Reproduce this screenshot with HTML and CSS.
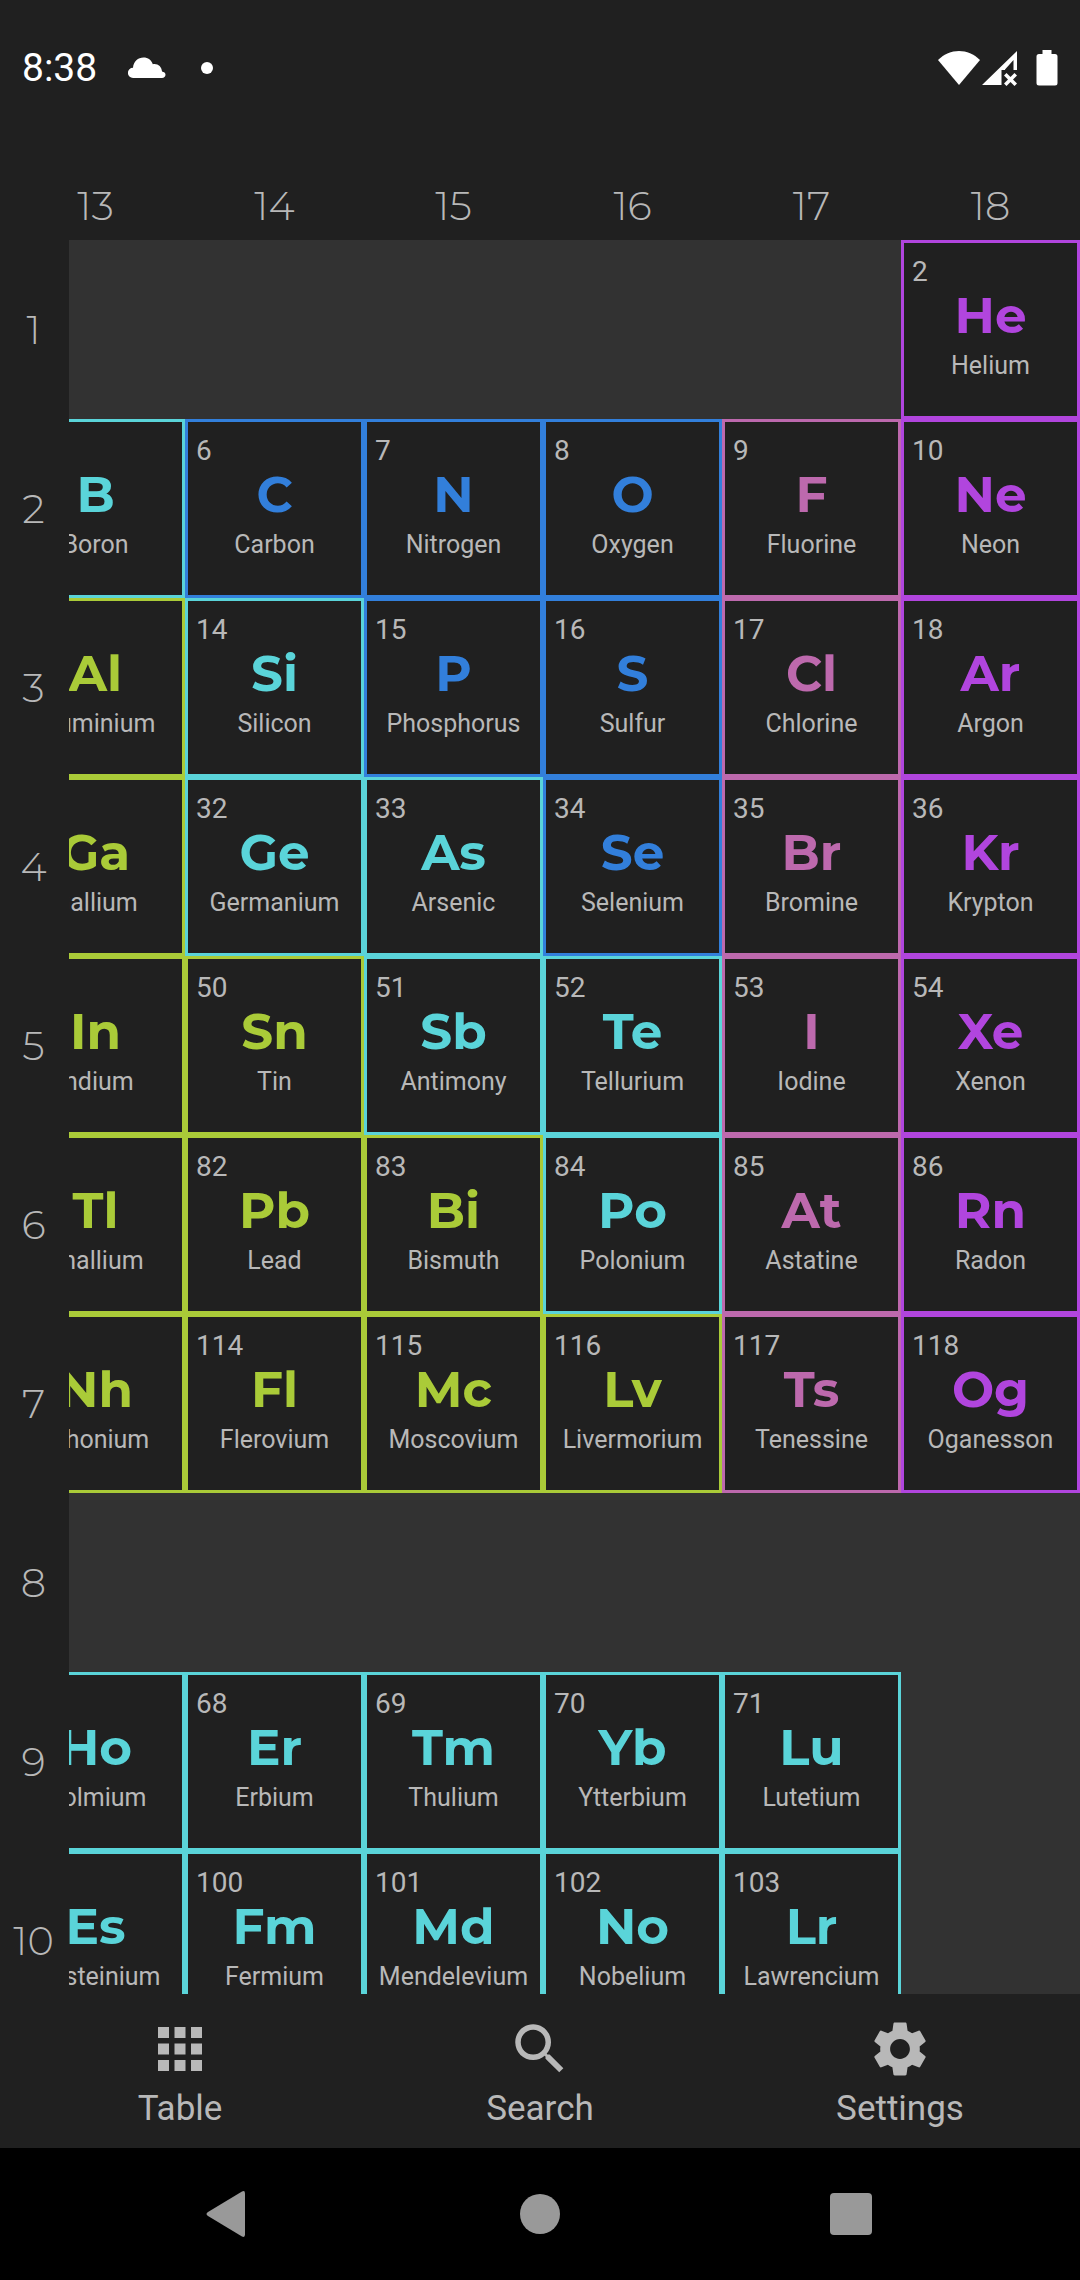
FILE: index.html
```html
<!DOCTYPE html>
<html lang="en">
<head>
<meta charset="utf-8">
<meta name="viewport" content="width=device-width, initial-scale=1">
<title>Periodic Table</title>
<link rel="stylesheet" href="styles.css">
</head>
<body>
<div class="screen">
  <header class="status">
    <div class="status-group status-left">
      <time class="clock">8:38</time>
      <svg class="cloud" width="38" height="22" viewBox="0 0 38 22" aria-hidden="true"><path d="M5 21a5 5 0 0 1 0-10.200C5.500 4.500 10 0.500 15.500 0.500c4.500 0 8 2.700 9.300 6.700 4.700-1 9 2.300 9.200 7.300 2 .3 3.500 1.500 3.500 3.300 0 2-1.500 3.200-3.500 3.200z"/></svg>
      <span class="dot"></span>
    </div>
    <div class="status-group status-right">
      <svg width="42" height="36" viewBox="0 0 42 36" aria-hidden="true"><path d="M0 10C12-2 30-2 42 10L21 35z"/></svg>
      <svg width="36" height="36" viewBox="0 0 36 36" aria-hidden="true"><path d="M0 35L35 1V20H31.500V10L23 19.500V20H19.500V35zM22 25.500l2.500-2.500 4 4 4-4 2.500 2.500-4 4 4 4-2.500 2.500-4-4-4 4-2.500-2.500 4-4z"/></svg>
      <svg class="battery" width="22" height="36" viewBox="0 0 22 36" aria-hidden="true"><path d="M6.500 0h9v4H19a2.500 2.500 0 0 1 2.500 2.500V33a2.500 2.500 0 0 1-2.500 2.500H3A2.500 2.500 0 0 1 .5 33V6.500A2.500 2.500 0 0 1 3 4h3.500z"/></svg>
    </div>
  </header>

  <main class="board">
    <table class="elements">
      <thead>
        <tr><th class="period"></th><th>13</th><th>14</th><th>15</th><th>16</th><th>17</th><th>18</th></tr>
      </thead>
      <tbody>
        <tr>
          <th class="period">1</th>
          <td colspan="5"></td>
          <td class="el noble"><span class="num">2</span><b>He</b><span class="name">Helium</span></td>
        </tr>
        <tr>
          <th class="period">2</th>
          <td class="el metalloid"><span class="num">5</span><b>B</b><span class="name">Boron</span></td>
          <td class="el nonmetal"><span class="num">6</span><b>C</b><span class="name">Carbon</span></td>
          <td class="el nonmetal"><span class="num">7</span><b>N</b><span class="name">Nitrogen</span></td>
          <td class="el nonmetal"><span class="num">8</span><b>O</b><span class="name">Oxygen</span></td>
          <td class="el halogen"><span class="num">9</span><b>F</b><span class="name">Fluorine</span></td>
          <td class="el noble"><span class="num">10</span><b>Ne</b><span class="name">Neon</span></td>
        </tr>
        <tr>
          <th class="period">3</th>
          <td class="el metal"><span class="num">13</span><b>Al</b><span class="name">Aluminium</span></td>
          <td class="el metalloid"><span class="num">14</span><b>Si</b><span class="name">Silicon</span></td>
          <td class="el nonmetal"><span class="num">15</span><b>P</b><span class="name">Phosphorus</span></td>
          <td class="el nonmetal"><span class="num">16</span><b>S</b><span class="name">Sulfur</span></td>
          <td class="el halogen"><span class="num">17</span><b>Cl</b><span class="name">Chlorine</span></td>
          <td class="el noble"><span class="num">18</span><b>Ar</b><span class="name">Argon</span></td>
        </tr>
        <tr>
          <th class="period">4</th>
          <td class="el metal"><span class="num">31</span><b>Ga</b><span class="name">Gallium</span></td>
          <td class="el metalloid"><span class="num">32</span><b>Ge</b><span class="name">Germanium</span></td>
          <td class="el metalloid"><span class="num">33</span><b>As</b><span class="name">Arsenic</span></td>
          <td class="el nonmetal"><span class="num">34</span><b>Se</b><span class="name">Selenium</span></td>
          <td class="el halogen"><span class="num">35</span><b>Br</b><span class="name">Bromine</span></td>
          <td class="el noble"><span class="num">36</span><b>Kr</b><span class="name">Krypton</span></td>
        </tr>
        <tr>
          <th class="period">5</th>
          <td class="el metal"><span class="num">49</span><b>In</b><span class="name">Indium</span></td>
          <td class="el metal"><span class="num">50</span><b>Sn</b><span class="name">Tin</span></td>
          <td class="el metalloid"><span class="num">51</span><b>Sb</b><span class="name">Antimony</span></td>
          <td class="el metalloid"><span class="num">52</span><b>Te</b><span class="name">Tellurium</span></td>
          <td class="el halogen"><span class="num">53</span><b>I</b><span class="name">Iodine</span></td>
          <td class="el noble"><span class="num">54</span><b>Xe</b><span class="name">Xenon</span></td>
        </tr>
        <tr>
          <th class="period">6</th>
          <td class="el metal"><span class="num">81</span><b>Tl</b><span class="name">Thallium</span></td>
          <td class="el metal"><span class="num">82</span><b>Pb</b><span class="name">Lead</span></td>
          <td class="el metal"><span class="num">83</span><b>Bi</b><span class="name">Bismuth</span></td>
          <td class="el metalloid"><span class="num">84</span><b>Po</b><span class="name">Polonium</span></td>
          <td class="el halogen"><span class="num">85</span><b>At</b><span class="name">Astatine</span></td>
          <td class="el noble"><span class="num">86</span><b>Rn</b><span class="name">Radon</span></td>
        </tr>
        <tr>
          <th class="period">7</th>
          <td class="el metal"><span class="num">113</span><b>Nh</b><span class="name">Nihonium</span></td>
          <td class="el metal"><span class="num">114</span><b>Fl</b><span class="name">Flerovium</span></td>
          <td class="el metal"><span class="num">115</span><b>Mc</b><span class="name">Moscovium</span></td>
          <td class="el metal"><span class="num">116</span><b>Lv</b><span class="name">Livermorium</span></td>
          <td class="el halogen"><span class="num">117</span><b>Ts</b><span class="name">Tenessine</span></td>
          <td class="el noble"><span class="num">118</span><b>Og</b><span class="name">Oganesson</span></td>
        </tr>
        <tr>
          <th class="period">8</th>
          <td colspan="6"></td>
        </tr>
        <tr>
          <th class="period">9</th>
          <td class="el metalloid"><span class="num">67</span><b>Ho</b><span class="name">Holmium</span></td>
          <td class="el metalloid"><span class="num">68</span><b>Er</b><span class="name">Erbium</span></td>
          <td class="el metalloid"><span class="num">69</span><b>Tm</b><span class="name">Thulium</span></td>
          <td class="el metalloid"><span class="num">70</span><b>Yb</b><span class="name">Ytterbium</span></td>
          <td class="el metalloid"><span class="num">71</span><b>Lu</b><span class="name">Lutetium</span></td>
          <td></td>
        </tr>
        <tr>
          <th class="period">10</th>
          <td class="el metalloid"><span class="num">99</span><b>Es</b><span class="name">Einsteinium</span></td>
          <td class="el metalloid"><span class="num">100</span><b>Fm</b><span class="name">Fermium</span></td>
          <td class="el metalloid"><span class="num">101</span><b>Md</b><span class="name">Mendelevium</span></td>
          <td class="el metalloid"><span class="num">102</span><b>No</b><span class="name">Nobelium</span></td>
          <td class="el metalloid"><span class="num">103</span><b>Lr</b><span class="name">Lawrencium</span></td>
          <td></td>
        </tr>
      </tbody>
    </table>
  </main>

  <nav class="tabs">
    <button class="tab" type="button">
      <svg width="66" height="66" viewBox="0 0 24 24" aria-hidden="true"><path d="M4 8h4V4H4v4zm6 12h4v-4h-4v4zm-6 0h4v-4H4v4zm0-6h4v-4H4v4zm6 0h4v-4h-4v4zm6-10v4h4V4h-4zm-6 4h4V4h-4v4zm6 6h4v-4h-4v4zm0 6h4v-4h-4v4z"/></svg>
      <span>Table</span>
    </button>
    <button class="tab" type="button">
      <svg width="66" height="66" viewBox="0 0 24 24" aria-hidden="true"><path d="M15.500 14h-.790l-.280-.270C15.410 12.590 16 11.110 16 9.500 16 5.910 13.090 3 9.500 3S3 5.910 3 9.500 5.910 16 9.500 16c1.610 0 3.090-.590 4.230-1.570l.270.280v.790l5 4.990L20.490 19l-4.990-5zm-6 0C7.010 14 5 11.990 5 9.500S7.010 5 9.500 5 14 7.010 14 9.500 11.990 14 9.500 14z"/></svg>
      <span>Search</span>
    </button>
    <button class="tab" type="button">
      <svg width="66" height="66" viewBox="0 0 24 24" aria-hidden="true"><path d="M19.140 12.940c.04-.3.06-.61.06-.94 0-.32-.02-.64-.07-.94l2.030-1.580c.18-.14.23-.41.12-.61l-1.920-3.320c-.12-.22-.37-.29-.59-.22l-2.390.96c-.5-.38-1.030-.7-1.620-.94l-.36-2.540c-.04-.24-.24-.41-.48-.41h-3.840c-.24 0-.43.17-.47.41l-.36 2.540c-.59.24-1.130.57-1.620.94l-2.390-.96c-.22-.08-.47 0-.59.22L2.740 8.870c-.12.21-.08.47.12.61l2.030 1.580c-.05.3-.09.63-.09.94s.02.64.07.94l-2.030 1.580c-.18.14-.23.41-.12.61l1.920 3.320c.12.22.37.29.59.22l2.390-.96c.5.38 1.030.7 1.620.94l.36 2.540c.05.24.24.41.48.41h3.840c.24 0 .44-.17.47-.41l.36-2.540c.59-.24 1.130-.56 1.620-.94l2.390.96c.22.08.47 0 .59-.22l1.920-3.320c.12-.22.07-.47-.12-.61l-2.010-1.580zM12 15.600c-1.980 0-3.600-1.620-3.600-3.600s1.620-3.600 3.600-3.600 3.600 1.620 3.600 3.600-1.620 3.600-3.600 3.600z"/></svg>
      <span>Settings</span>
    </button>
  </nav>

  <footer class="system">
    <button type="button" aria-label="Back"><svg width="48" height="48" viewBox="0 0 48 48" aria-hidden="true"><path d="M38 1.500q3-1.500 3 2v41q0 3.500-3 2L4 26q-3-2 0-4z"/></svg></button>
    <button type="button" aria-label="Home"><svg width="48" height="48" viewBox="0 0 48 48" aria-hidden="true"><circle cx="24" cy="24" r="20"/></svg></button>
    <button type="button" aria-label="Recents"><svg width="48" height="48" viewBox="0 0 48 48" aria-hidden="true"><rect x="2" y="3" width="42" height="42" rx="4"/></svg></button>
  </footer>
</div>
</body>
</html>
```
FILE: styles.css
```css
:root {
  --surface: #202020;
  --empty: #323232;
  --text: #b8b8b8;
  --cell: 179px;
  --gutter: 69px;
  --display: Montserrat, Inter, sans-serif;
}

* {
  box-sizing: border-box;
}

body {
  margin: 0;
  background: #000;
  color: var(--text);
  font-family: Roboto, sans-serif;
}

svg {
  display: block;
  flex: none;
  fill: currentColor;
}

button {
  padding: 0;
  border: 0;
  background: none;
  color: inherit;
  font: inherit;
}

.screen {
  display: flex;
  flex-direction: column;
  height: 100vh;
  background: var(--surface);
}

/* Status bar */
.status {
  display: flex;
  flex: none;
  justify-content: space-between;
  padding: 44px 22px 79px 22px;
  color: #fff;
}

.status-group {
  display: flex;
  align-items: center;
  height: 48px;
}

.clock {
  font-size: 39px;
  line-height: 52px;
}

.cloud {
  margin-left: 31px;
}

.dot {
  width: 12px;
  height: 12px;
  margin-left: 35px;
  border-radius: 50%;
  background: currentColor;
}

.status-right {
  gap: 2px;
}

.battery {
  margin-left: 16px;
}

/* The board scrolls from its right edge; group and period headings stay put */
.board {
  flex: 1;
  min-height: 0;
  overflow: auto;
  direction: rtl;
  scrollbar-width: none;
}

.elements {
  direction: ltr;
  width: calc(var(--gutter) + 6 * var(--cell));
  table-layout: fixed;
  border-spacing: 0;
  background: var(--empty);
}

.elements th {
  height: var(--cell);
  padding: 0;
  background: var(--surface);
  font: 300 40px/48px var(--display);
}

.elements thead th {
  position: sticky;
  top: 0;
  z-index: 1;
  width: var(--cell);
  height: 69px;
}

.elements .period {
  position: sticky;
  left: 0;
  z-index: 1;
  padding-right: 2px;
}

.elements thead .period {
  z-index: 2;
  width: var(--gutter);
}

.elements td {
  height: var(--cell);
  padding: 0;
  vertical-align: top;
  text-align: center;
}

.elements .el {
  padding: 13px 8px 0;
  border: 3px solid var(--kind);
  background: var(--surface);
}

.el span,
.el b {
  display: block;
}

.num {
  font-size: 28px;
  line-height: 32px;
  text-align: left;
}

.el b {
  color: var(--kind);
  font: 700 50px/56px var(--display);
}

.name {
  margin: 8px -8px 0;
  font-size: 25px;
  line-height: 28px;
}

.noble { --kind: #b145de; }
.halogen { --kind: #bd69ad; }
.nonmetal { --kind: #327fdb; }
.metalloid { --kind: #5ad4d9; }
.metal { --kind: #aacb38; }

/* App tabs */
.tabs {
  display: grid;
  flex: none;
  grid-template-columns: repeat(3, 1fr);
  background: var(--surface);
}

.tab {
  display: flex;
  flex-direction: column;
  align-items: center;
  gap: 6px;
  padding: 22px 0 18px;
  font-size: 35px;
  line-height: 42px;
}

/* System navigation */
.system {
  display: grid;
  flex: none;
  grid-template-columns: repeat(3, 1fr);
  padding: 0 72px;
  background: #000;
  color: #999;
}

.system button {
  display: grid;
  place-items: center;
  height: 132px;
}
```
